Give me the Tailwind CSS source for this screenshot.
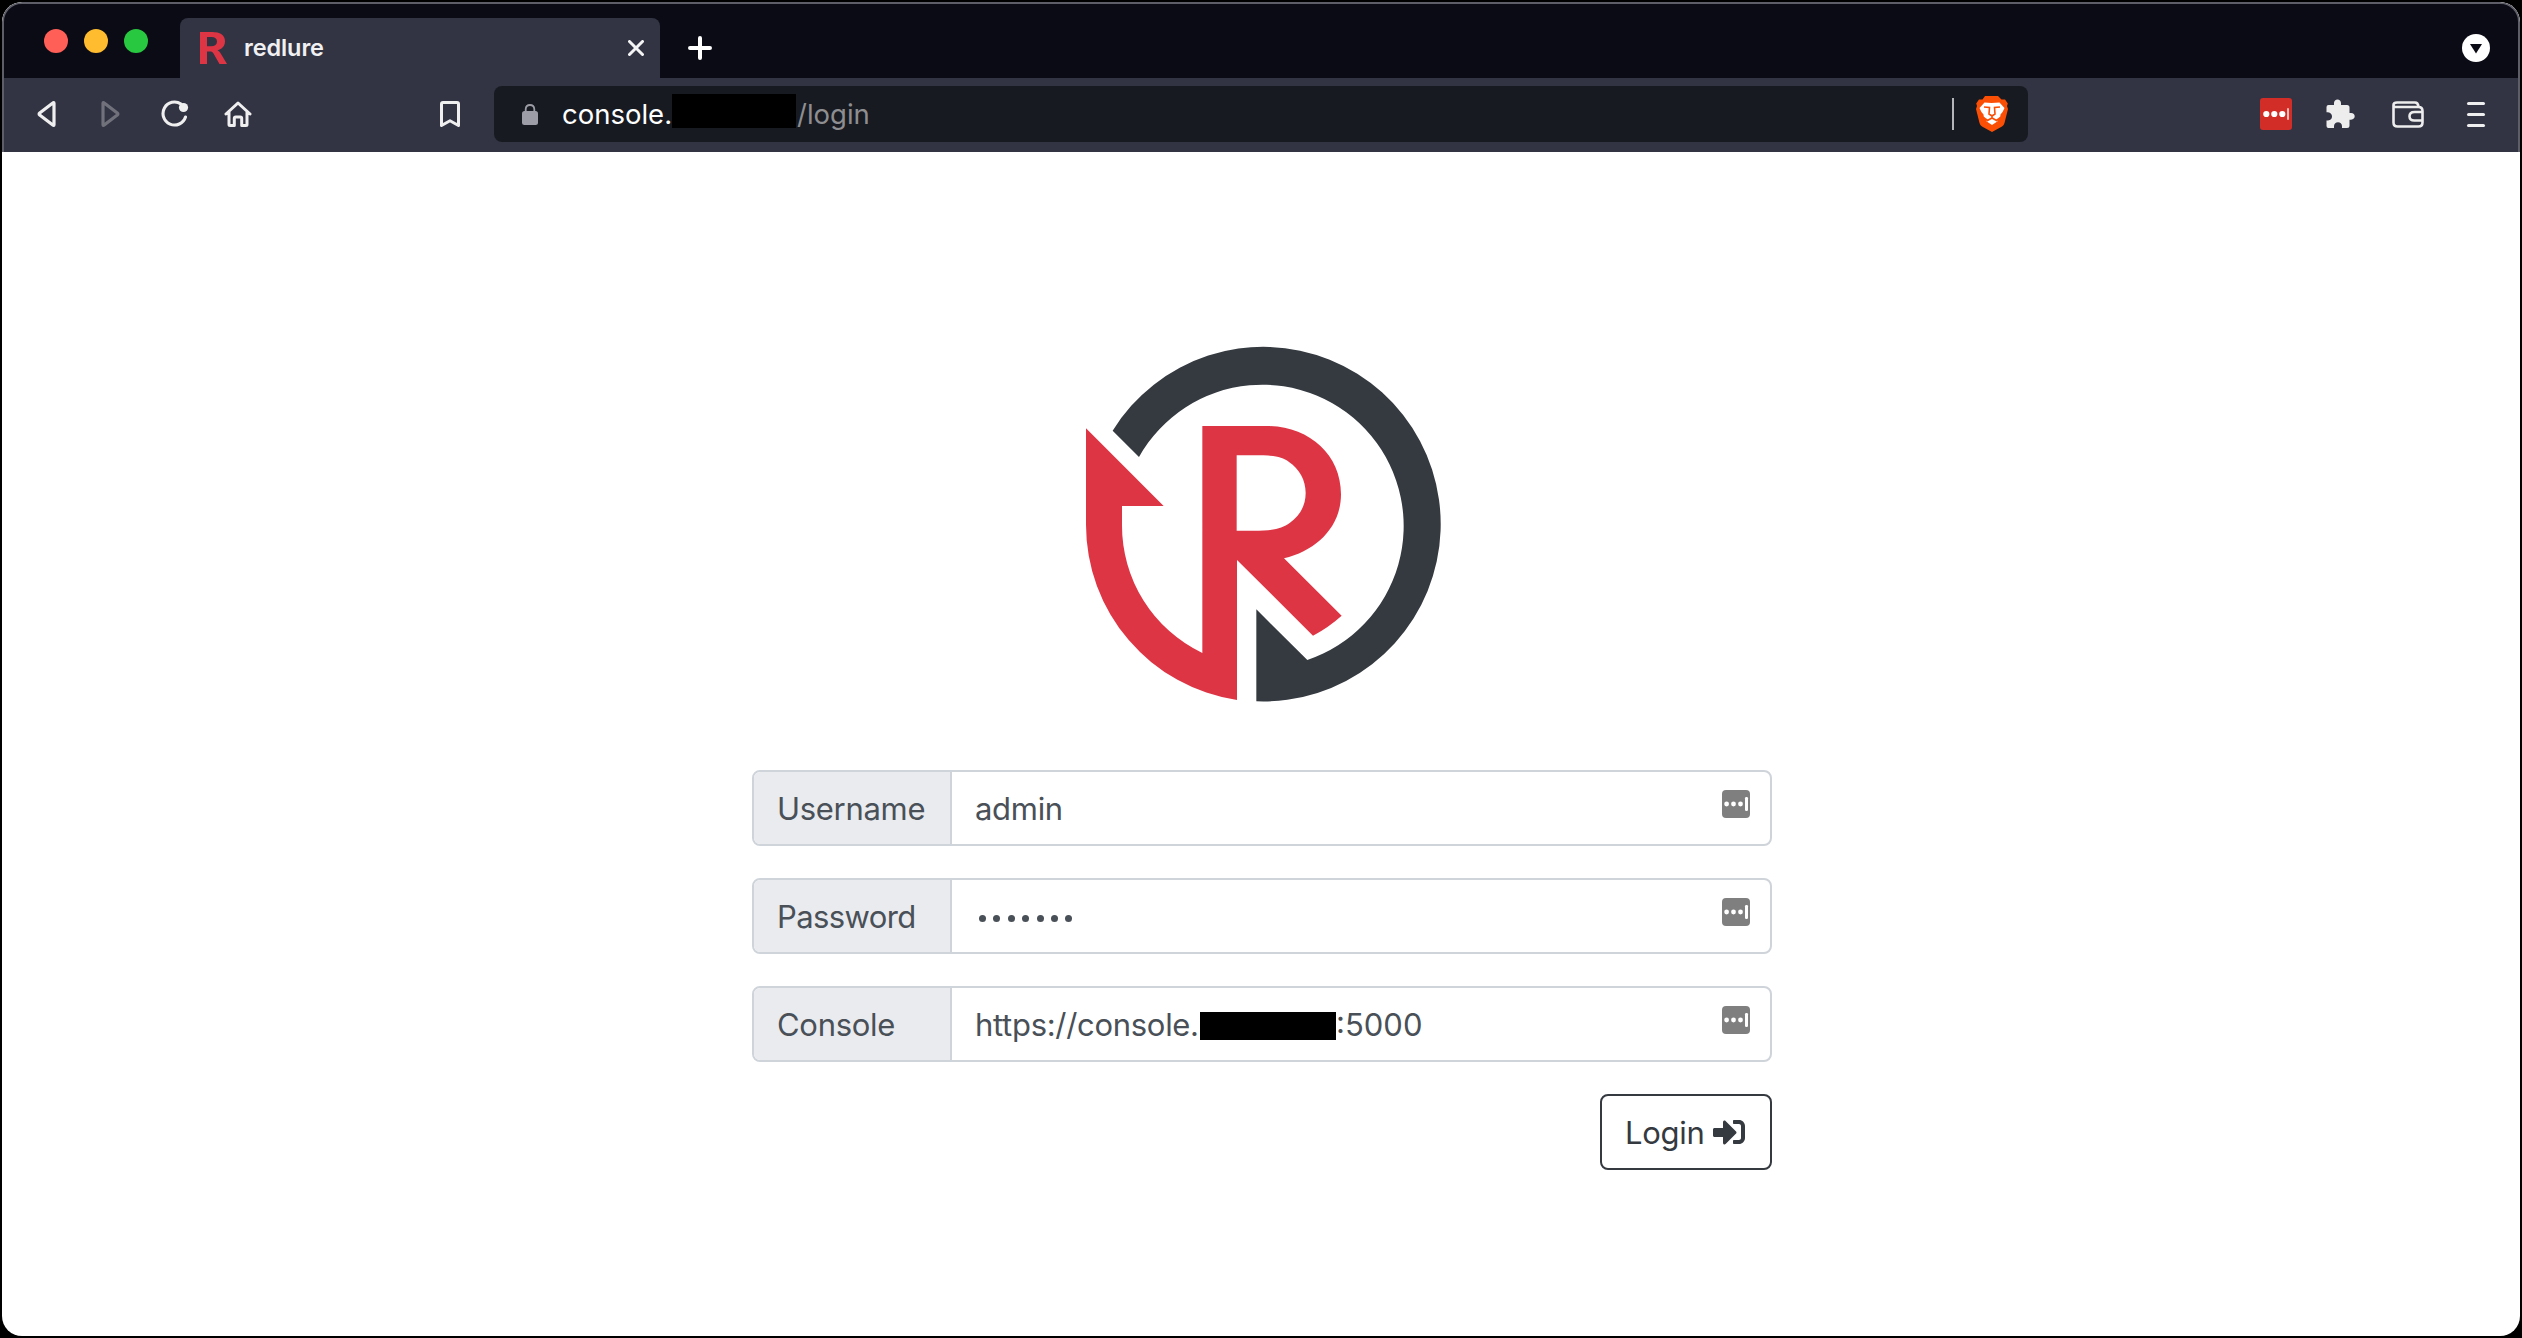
<!DOCTYPE html>
<html lang="en">
<head>
<meta charset="utf-8">
<title>redlure</title>
<script src="https://cdn.jsdelivr.net/npm/@tailwindcss/browser@4"></script>
</head>
<body class="bg-black font-['Inter',sans-serif] w-[2522px] h-[1338px] overflow-hidden p-0.5">
<svg class="hidden">
  <symbol id="fill" viewBox="0 0 28 28"><rect width="28" height="28" rx="4" fill="#7f7f7f"/><g fill="#fff"><circle cx="4.600" cy="14" r="2.400"/><circle cx="11.500" cy="14" r="2.400"/><circle cx="18.500" cy="14" r="2.400"/><rect x="23" y="7" width="3" height="14" rx="1.300"/></g></symbol>
</svg>
<div class="w-[2518px] h-[1334px] rounded-[20px] overflow-hidden bg-white flex flex-col">
  <header class="h-[150px] shrink-0 bg-[#323443] border-t-2 border-x-2 border-[#5d5e67] rounded-t-[20px] overflow-hidden flex flex-col">
    <div class="h-[74px] bg-[#0b0b15] flex items-end pr-[28px]">
      <div class="flex gap-4 pl-10 w-[176px] h-full pt-[25px]">
        <span class="size-6 rounded-full bg-[#ff5f57]"></span><span class="size-6 rounded-full bg-[#febc2e]"></span><span class="size-6 rounded-full bg-[#28c840]"></span>
      </div>
      <div class="w-[480px] h-[60px] rounded-t-[8px] bg-[#323443] flex items-center pl-5 pr-4">
        <svg class="w-[27px] h-8" viewBox="0 0 27 32"><path fill="#de3545" fill-rule="evenodd" d="M0 0H12C20 0 25 3 25 9.300C25 14 22 17.200 17.500 18.300C19 19 20 20.500 21 22L27 32H19.500L13.500 21.500C12.600 20 11.800 19.500 10 19.500H7V32H0ZM7 5V14.300H11C15 14.300 17 12.700 17 9.600C17 6.500 15 5 11.500 5Z"/></svg>
        <span class="ml-[17px] text-[23.500px] leading-8 font-semibold tracking-[-0.1px] text-[#f0f0f2]">redlure</span>
        <svg class="ml-auto size-4" viewBox="0 0 16 16"><path d="M1.500 1.500 14.500 14.500M14.500 1.500 1.500 14.500" stroke="#f4f4f5" stroke-width="3" stroke-linecap="round"/></svg>
      </div>
      <div class="h-[60px] flex-1 flex items-center pl-[28px]">
        <svg class="size-6" viewBox="0 0 24 24"><path d="M12 2V22M2 12H22" stroke="#fff" stroke-width="4" stroke-linecap="round"/></svg>
        <svg class="ml-auto size-7" viewBox="0 0 28 28"><circle cx="14" cy="14" r="14" fill="#fff"/><path d="M8 10H20L14 19.500Z" fill="#0b0b15"/></svg>
      </div>
    </div>
    <div class="h-[74px] flex items-center pb-0.5">
      <svg class="ml-[33px] w-[20px] h-7 shrink-0" viewBox="0 0 20 28"><path d="M17 3.300V24.700Q17 26 15.800 25L2.700 15Q1.500 14 2.700 13L15.800 3Q17 2 17 3.300Z" fill="none" stroke="#efeff0" stroke-width="3.200" stroke-linejoin="round"/></svg>
      <svg class="ml-[43px] w-[20px] h-7 shrink-0" viewBox="0 0 20 28"><path d="M3 3.300V24.700Q3 26 4.200 25L17.300 15Q18.500 14 17.300 13L4.200 3Q3 2 3 3.300Z" fill="none" stroke="#70717b" stroke-width="3.200" stroke-linejoin="round"/></svg>
      <svg class="ml-[41px] size-7 shrink-0" viewBox="0 0 28 28"><path d="M20 4A11.500 11.500 0 1 0 24.500 17" fill="none" stroke="#efeff0" stroke-width="3.100" stroke-linecap="round"/><circle cx="22.500" cy="7.500" r="4.600" fill="#efeff0"/></svg>
      <svg class="ml-[35px] size-7 shrink-0" viewBox="0 0 28 28"><path d="M2 14 14 3 26 14M5 12V24.500Q5 25.500 6 25.500H10.300V18.500Q10.300 17 11.800 17H16.200Q17.700 17 17.700 18.500V25.500H22Q23 25.500 23 24.500V12" fill="none" stroke="#efeff0" stroke-width="3" stroke-linecap="round" stroke-linejoin="round"/></svg>
      <svg class="ml-[188px] w-5 h-[26px] shrink-0" viewBox="0 0 20 26"><path d="M1.500 3Q1.500 1.500 3 1.500H17Q18.500 1.500 18.500 3V24.500L10 19.800 1.500 24.500Z" fill="none" stroke="#efeff0" stroke-width="3" stroke-linejoin="round"/></svg>
      <div class="ml-[34px] w-[1534px] h-[56px] shrink-0 rounded-[8px] bg-[#181a21] flex items-center pl-[28px] pr-[20px]">
        <svg class="w-4 h-[21px]" viewBox="0 0 16 21"><rect y="7" width="16" height="14" rx="2.500" fill="#9c9da6"/><path d="M3.700 8V5Q4 1 8 1T12.300 5V8" fill="none" stroke="#9c9da6" stroke-width="1.800"/></svg>
        <span class="ml-[24px] w-[110px] text-[27.500px] leading-8 text-white whitespace-nowrap">console.</span>
        <span class="w-[124px] h-[34px] bg-black -mt-[7px]"></span>
        <span class="ml-px text-[27.500px] leading-8 text-[#8e8e91]">/login</span>
        <span class="ml-auto w-0.5 h-8 bg-[#b4b5b9]"></span>
        <svg class="ml-[22px] w-8 h-9" viewBox="0 0 32 36"><path fill="#fb4f05" d="M9 0H22L25.500 3.500 29 3.500 31.800 7.500 31 10 32 13 28.500 27Q28 29 26 30.500L16 36 6 30.500Q4 29 3.500 27L0 13 1 10 .2 7.500 3 3.500 6.500 3.500Z"/><path fill="#fff" d="M8.500 6.500 15.500 7 23.500 6.500 28.500 12Q27 16 24.500 18.500 25 20.500 22.500 22L20 23.500 22 25 16 29 10 25 12 23.500 9.500 22Q7 20.500 7.500 18.500 5 16 3.500 12Z"/><path fill="none" stroke="#fb4f05" stroke-width="1.600" d="M8 11 13.500 11.500 13 18 16 20 19 18 18.500 11.500 24 11M16 20V22.200M10.500 25 16 22 21.500 25"/></svg>
      </div>
      <svg class="ml-[232px] size-8 shrink-0" viewBox="0 0 32 32"><rect width="32" height="32" rx="3" fill="#d32d27"/><g fill="#fff"><circle cx="6.300" cy="16" r="3.100"/><circle cx="14.300" cy="16" r="3.100"/><circle cx="22.300" cy="16" r="3.100"/></g><rect x="27" y="10" width="2" height="12" rx="1" fill="#f3b9b6"/></svg>
      <svg class="ml-[34px] w-[29px] h-[30px] shrink-0" viewBox="0 0 29 30"><path fill="#ededee" d="M2.500 6H8V4Q8.300 .5 11.500 .5T15 4V6H21Q23.500 6 23.500 8.500V14H25Q28.700 14.300 28.700 17.300T25 20.700H23.500V26.500Q23.500 29 21 29H16V27Q15.500 23.300 12 23.300T8 27V29H2.500Q.5 29 .5 27V21.500H2Q6 21 6 17.500T2 13.300H.5V8Q.5 6 2.500 6Z"/></svg>
      <svg class="ml-[37px] w-8 h-[27px] shrink-0" viewBox="0 0 32 27"><path d="M1.500 4V21.500Q1.500 25.500 5.500 25.500H26.500Q30.500 25.500 30.500 21.500V10Q30.500 6 26.500 6H4Q1.500 6 1.500 4Q1.500 1.500 5 1.500H23Q26 1.500 26.500 5.500M30.500 11H22.500Q17.500 11 17.500 15.300T22.500 19.500H30.500" fill="none" stroke="#ededee" stroke-width="2.600"/></svg>
      <div class="ml-[43px] w-[18px] h-[25px] flex flex-col justify-between"><span class="h-[3px] rounded-full bg-[#efeff0]"></span><span class="h-[3px] rounded-full bg-[#efeff0]"></span><span class="h-[3px] rounded-full bg-[#efeff0]"></span></div>
    </div>
  </header>
  <main class="flex-1 flex flex-col items-center pt-[178px] text-[31px] tracking-[-0.3px] leading-[48px] text-[#495057]">
    <svg class="w-[400px] h-[390px] shrink-0 mr-0.5" viewBox="0 0 1200 1170">
      <path fill="#343a40" d="M158 302A532 532 0 1 1 589 1114V838L742 990A424 424 0 1 0 237 381Z"/>
      <path fill="#de3545" fill-rule="evenodd" d="M78 295 311 528H186V582A424 424 0 0 0 427 969V288H620C745 288 843 372 843 493C843 590 770 662 672 685L845 857Q806 892 759 917L531 690V1110A532 532 0 0 1 78 582ZM530 376V602H580C640 602 664 596 690 578C720 557 737 526 737 489C737 450 718 417 687 396C664 379 640 376 580 376Z"/>
    </svg>
    <form class="w-[1020px] mt-[50px] ml-0.5 flex flex-col gap-8">
      <div class="h-[76px] flex border-2 border-[#ced4da] rounded-[8px] overflow-hidden">
        <label class="w-[198px] bg-[#e9ebef] border-r-2 border-[#ced4da] pl-[23px] pt-px flex items-center">Username</label>
        <div class="flex-1 flex items-center pl-[23px] pr-5"><span class="pt-px">admin</span><svg class="ml-auto -mt-2 size-7"><use href="#fill"/></svg></div>
      </div>
      <div class="h-[76px] flex border-2 border-[#ced4da] rounded-[8px] overflow-hidden">
        <label class="w-[198px] bg-[#e9ebef] border-r-2 border-[#ced4da] pl-[23px] pt-px flex items-center tracking-[-0.6px]">Password</label>
        <div class="flex-1 flex items-center pl-[27px] pr-5"><div class="flex gap-[7.400px] mt-[5px]"><span class="size-[7px] rounded-full bg-[#495057]"></span><span class="size-[7px] rounded-full bg-[#495057]"></span><span class="size-[7px] rounded-full bg-[#495057]"></span><span class="size-[7px] rounded-full bg-[#495057]"></span><span class="size-[7px] rounded-full bg-[#495057]"></span><span class="size-[7px] rounded-full bg-[#495057]"></span><span class="size-[7px] rounded-full bg-[#495057]"></span></div><svg class="ml-auto -mt-2 size-7"><use href="#fill"/></svg></div>
      </div>
      <div class="h-[76px] flex border-2 border-[#ced4da] rounded-[8px] overflow-hidden">
        <label class="w-[198px] bg-[#e9ebef] border-r-2 border-[#ced4da] pl-[23px] pt-px flex items-center">Console</label>
        <div class="flex-1 flex items-center pl-[23px] pr-5"><span class="w-[225px] pt-px whitespace-nowrap">https://console.</span><span class="w-[136px] h-7 bg-black mt-[4px]"></span><span class="pt-px tracking-normal">:5000</span><svg class="ml-auto -mt-2 size-7"><use href="#fill"/></svg></div>
      </div>
      <button type="button" class="self-end w-[172px] h-[76px] border-2 border-[#343a40] rounded-[8px] pl-[23px] flex items-center text-[#343a40]"><span class="w-[88px] pt-px text-left">Login</span><svg class="size-8" viewBox="0 0 512 512"><path fill="currentColor" d="M416 448h-84c-6.600 0-12-5.400-12-12v-40c0-6.600 5.400-12 12-12h84c17.700 0 32-14.300 32-32V160c0-17.700-14.300-32-32-32h-84c-6.600 0-12-5.400-12-12V76c0-6.600 5.400-12 12-12h84c53 0 96 43 96 96v192c0 53-43 96-96 96zm-47-201L201 79c-15-15-41-4.500-41 17v96H24c-13.300 0-24 10.700-24 24v96c0 13.300 10.700 24 24 24h136v96c0 21.500 26 32 41 17l168-168c9.300-9.400 9.300-24.600 0-34z"/></svg></button>
    </form>
  </main>
</div>
</body>
</html>
